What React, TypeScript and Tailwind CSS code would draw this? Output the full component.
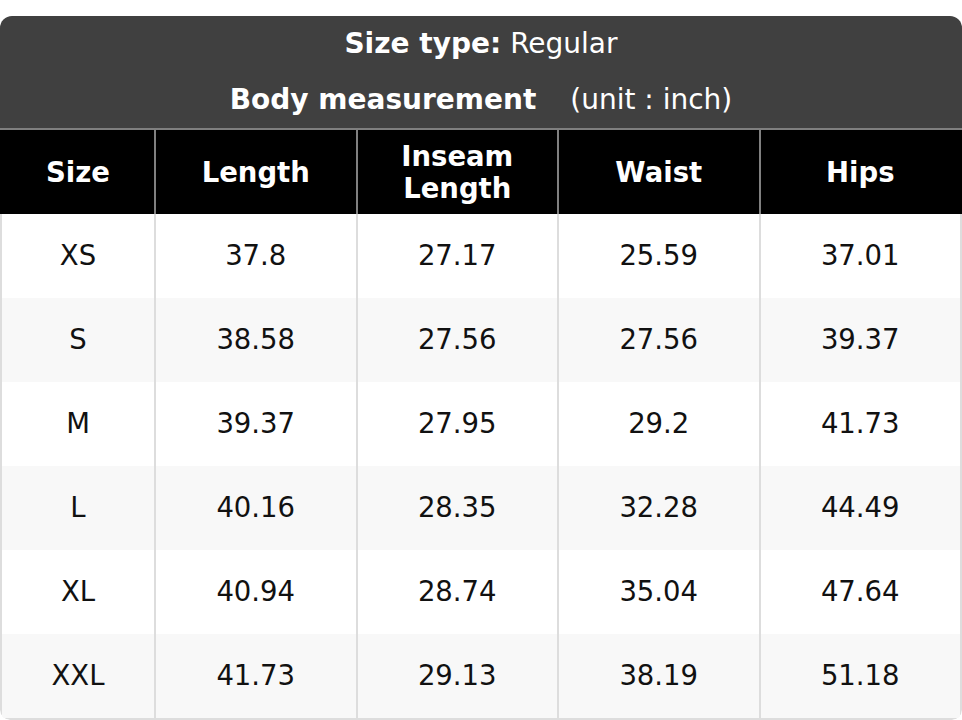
const columns = ['Size', 'Length', 'Inseam Length', 'Waist', 'Hips'];

const rows = [
  ['XS', '37.8', '27.17', '25.59', '37.01'],
  ['S', '38.58', '27.56', '27.56', '39.37'],
  ['M', '39.37', '27.95', '29.2', '41.73'],
  ['L', '40.16', '28.35', '32.28', '44.49'],
  ['XL', '40.94', '28.74', '35.04', '47.64'],
  ['XXL', '41.73', '29.13', '38.19', '51.18'],
];

export default function App() {
  return (
    <div
      className="w-[962px] h-[720px] bg-white pt-4"
      style={{ fontFamily: '"DejaVu Sans", "Liberation Sans", sans-serif' }}
    >
      <div className="rounded-t-[12px] rounded-b-[10px] overflow-hidden">
        {/* title block */}
        <div className="bg-[#404040] text-white text-[28px] border-b-2 border-[#7f7f7f]">
          <div className="h-[56px] flex items-center justify-center">
            <span className="font-bold">Size type:</span>
            <span className="ml-[9px]">Regular</span>
          </div>
          <div className="h-[56px] flex items-center justify-center">
            <span className="font-bold">Body measurement</span>
            <span className="ml-[34px]">(unit : inch)</span>
          </div>
        </div>

        {/* column heads */}
        <div className="bg-black border-x-2 border-black grid grid-cols-[152px_1fr_1fr_1fr_1fr] h-[84px]">
          {columns.map((c, i) => (
            <div
              key={c}
              className={`flex items-center justify-center text-center text-white font-bold text-[27.5px] leading-[32px] px-10 ${
                i > 0 ? 'border-l-2 border-[#808080]' : ''
              }`}
            >
              {c}
            </div>
          ))}
        </div>

        {/* body */}
        <div className="border-x-2 border-b-2 border-[#dddddd] rounded-b-[10px]">
          {rows.map((r, ri) => (
            <div
              key={r[0]}
              className={`grid grid-cols-[152px_1fr_1fr_1fr_1fr] h-[84px] ${
                ri % 2 === 1 ? 'bg-[#f8f8f8]' : 'bg-white'
              }`}
            >
              {r.map((v, ci) => (
                <div
                  key={ci}
                  className={`flex items-center justify-center text-[27.5px] text-[#111111] ${
                    ci > 0 ? 'border-l-2 border-[#dddddd]' : ''
                  }`}
                >
                  {v}
                </div>
              ))}
            </div>
          ))}
        </div>
      </div>
    </div>
  );
}
